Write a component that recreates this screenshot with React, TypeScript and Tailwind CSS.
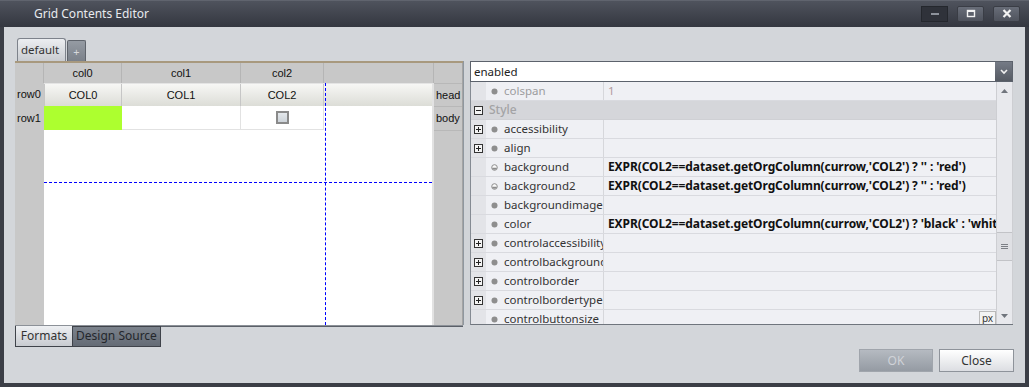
import React from 'react';

type Prop = {
  name?: string;
  value?: string;
  group?: string;
  expand?: boolean;
  half?: boolean;
  disabled?: boolean;
  px?: boolean;
};

const EXPR_RED = "EXPR(COL2==dataset.getOrgColumn(currow,'COL2') ? '' : 'red')";
const EXPR_COLOR = "EXPR(COL2==dataset.getOrgColumn(currow,'COL2') ? 'black' : 'white')";

const props: Prop[] = [
  { name: 'colspan', value: '1', disabled: true },
  { group: 'Style' },
  { name: 'accessibility', expand: true },
  { name: 'align', expand: true },
  { name: 'background', half: true, value: EXPR_RED },
  { name: 'background2', half: true, value: EXPR_RED },
  { name: 'backgroundimage' },
  { name: 'color', value: EXPR_COLOR },
  { name: 'controlaccessibility', expand: true },
  { name: 'controlbackground', expand: true },
  { name: 'controlborder', expand: true },
  { name: 'controlbordertype', expand: true },
  { name: 'controlbuttonsize', px: true },
];

const ExpandBox = ({ open }: { open?: boolean }) => (
  <svg width="9" height="9" viewBox="0 0 9 9">
    <rect x="0.5" y="0.5" width="8" height="8" fill="#f4f4f4" stroke="#333" />
    <line x1="2" y1="4.5" x2="7" y2="4.5" stroke="#222" />
    {!open && <line x1="4.5" y1="2" x2="4.5" y2="7" stroke="#222" />}
  </svg>
);

const Bullet = ({ half }: { half?: boolean }) =>
  half ? (
    <svg width="7" height="7" viewBox="0 0 7 7">
      <circle cx="3.5" cy="3.5" r="2.8" fill="#fafafa" stroke="#8c8c8c" />
      <path d="M0.8 3.8 A2.8 2.8 0 0 0 6.2 3.8 Z" fill="#8c8c8c" />
    </svg>
  ) : (
    <svg width="7" height="7" viewBox="0 0 7 7">
      <circle cx="3.5" cy="3.5" r="3" fill="#8e8e8e" />
    </svg>
  );

const TitleButton = ({ kind }: { kind: 'min' | 'max' | 'close' }) => (
  <div
    className={
      kind === 'min'
        ? 'w-[27px] h-[16px] flex items-center justify-center border border-[#24272d] bg-[#2f323a]'
        : 'w-[27px] h-[16px] flex items-center justify-center rounded-[2px] border border-[#3a3d45] bg-gradient-to-b from-[#686d78] to-[#4f535d]'
    }
  >
    {kind === 'min' && (
      <svg width="10" height="6" viewBox="0 0 10 6">
        <rect x="1" y="2" width="8" height="2" fill="#8d929b" />
      </svg>
    )}
    {kind === 'max' && (
      <svg width="10" height="9" viewBox="0 0 10 9">
        <rect x="1.5" y="1.5" width="7" height="6" fill="none" stroke="#f2f2f2" strokeWidth="1.4" />
        <rect x="1" y="1" width="8" height="2" fill="#f2f2f2" />
      </svg>
    )}
    {kind === 'close' && (
      <svg width="10" height="9" viewBox="0 0 10 9">
        <path d="M1.5 1 L8.5 8 M8.5 1 L1.5 8" stroke="#f2f2f2" strokeWidth="2.2" />
      </svg>
    )}
  </div>
);

const gridFont = "font-['Liberation_Sans',Arial,sans-serif] text-[11px] text-[#111]";

const GridArea = () => (
  <div className="flex flex-col h-[264px] border-t-2 border-[#a8997e]">
    {/* column header */}
    <div className={`flex h-[20px] bg-[#c8c8c8] ${gridFont}`}>
      <div className="w-[29px] border-r border-[#b5b5b5]" />
      <div className="w-[78px] border-r border-[#b5b5b5] flex items-center justify-center">col0</div>
      <div className="w-[119px] border-r border-[#b5b5b5] flex items-center justify-center">col1</div>
      <div className="w-[83px] border-r border-[#b5b5b5] flex items-center justify-center">col2</div>
      <div className="w-[110px] border-r border-[#b5b5b5]" />
      <div className="w-[29px] border-r border-[#a4a4a4]" />
    </div>
    <div className={`flex h-[242px] ${gridFont}`}>
      {/* row header */}
      <div className="w-[29px] bg-[#c8c8c8] flex flex-col">
        <div className="h-[23px] flex items-center pl-[2px]">row0</div>
        <div className="h-[24px] flex items-center pl-[2px]">row1</div>
      </div>
      {/* canvas */}
      <div className="relative w-[388px] bg-white">
        <div className="flex h-[23px] bg-gradient-to-b from-[#f7f7f5] to-[#dcddd7] border-t border-[#e4e4e4]">
          <div className="w-[78px] border-x border-[#c6c6c6] flex items-center justify-center">COL0</div>
          <div className="w-[119px] border-r border-[#c6c6c6] flex items-center justify-center">COL1</div>
          <div className="w-[83px] border-r border-[#c6c6c6] flex items-center justify-center">COL2</div>
        </div>
        <div className="flex h-[24px]">
          <div className="w-[78px] bg-[#adff2f]" />
          <div className="w-[119px] border-r border-b border-[#e2e2e2]" />
          <div className="w-[83px] border-r border-b border-[#e2e2e2] flex items-center justify-center">
            <div className="w-[13px] h-[13px] border-2 border-[#8a8a8a] bg-gradient-to-b from-[#e4e8ec] to-[#cdd3d9]" />
          </div>
        </div>
        <div className="absolute left-[281px] top-0 bottom-0 border-l border-dashed border-[#0000ff]" />
        <div className="absolute left-0 right-0 top-[99px] border-t border-dashed border-[#0000ff]" />
      </div>
      <div className="w-[2px] bg-[#e2e2e2]" />
      {/* band column */}
      <div className="w-[29px] bg-[#c8c8c8] border-r border-[#a4a4a4] flex flex-col">
        <div className="h-[24px] flex items-center pl-[2px] border-t border-b border-[#b8b8b8]">head</div>
        <div className="h-[24px] flex items-center pl-[2px] border-b border-[#b8b8b8]">body</div>
      </div>
    </div>
  </div>
);

const PropRow = ({ p }: { p: Prop }) => {
  if (p.group) {
    return (
      <div className="flex h-[19px] shrink-0 bg-[#d5d6da] border-b border-[#cfd0d4] items-center">
        <div className="w-[15px] flex items-center justify-center">
          <ExpandBox open />
        </div>
        <span className="ml-[3px] text-[12px] font-medium text-[#a3a3a5]">{p.group}</span>
      </div>
    );
  }
  return (
    <div className="flex h-[19px] shrink-0 bg-[#eff0f4] border-b border-[#d9dadf]">
      <div className="w-[15px] bg-[#e3e4e8] flex items-center justify-center">
        {p.expand && <ExpandBox />}
      </div>
      <div className="w-[118px] border-r border-[#d6d7db] flex items-center overflow-hidden whitespace-nowrap">
        <span className="ml-[5px] flex">
          <Bullet half={p.half} />
        </span>
        <span className={`ml-[6px] text-[11.5px] ${p.disabled ? 'text-[#9c9c9e]' : 'text-[#333]'}`}>{p.name}</span>
      </div>
      <div className="flex-1 flex items-center overflow-hidden whitespace-nowrap pl-[4px]">
        {p.value && (
          <span
            className={
              p.disabled
                ? 'text-[11.5px] text-[#b09a9e]'
                : 'text-[12px] font-bold text-[#111] tracking-[-0.1px]'
            }
          >
            {p.value}
          </span>
        )}
        {p.px && (
          <div className="ml-auto self-start mt-[1px] w-[17px] h-[14px] border border-[#b9b9b9] bg-[#f3f3f3] text-[10px] leading-[12px] text-[#333] text-center">
            px
          </div>
        )}
      </div>
    </div>
  );
};

const ScrollBar = () => (
  <div className="w-[17px] bg-[#e8e9ed] border-l border-[#cdced2] border-r border-[#8f959d] flex flex-col">
    <div className="h-[17px] flex items-center justify-center">
      <svg width="7" height="4" viewBox="0 0 7 4">
        <path d="M0 4 L3.5 0 L7 4 Z" fill="#70757d" />
      </svg>
    </div>
    <div className="flex-1 flex flex-col">
      <div className="h-[133px]" />
      <div className="h-[29px] bg-[#dfe0e4] border-y border-[#c2c3c7] flex items-center justify-center">
        <svg width="7" height="7" viewBox="0 0 7 7">
          <path d="M0 1.5 H7 M0 3.5 H7 M0 5.5 H7" stroke="#7c7f85" />
        </svg>
      </div>
    </div>
    <div className="h-[17px] flex items-center justify-center">
      <svg width="7" height="4" viewBox="0 0 7 4">
        <path d="M0 0 L7 0 L3.5 4 Z" fill="#70757d" />
      </svg>
    </div>
  </div>
);

export default function App() {
  return (
    <div className="w-[1029px] h-[387px] flex flex-col bg-[#3b3e46] overflow-hidden font-['Noto_Sans',sans-serif]">
      {/* title bar */}
      <div className="h-[27px] shrink-0 flex items-center pl-[34px] pr-[9px] border-t border-[#60646e] bg-gradient-to-b from-[#4f535d] to-[#343740]">
        <span className="text-[12px] text-[#e8eaee]">Grid Contents Editor</span>
        <div className="ml-auto flex gap-[9px] -mt-[1px]">
          <TitleButton kind="min" />
          <TitleButton kind="max" />
          <TitleButton kind="close" />
        </div>
      </div>

      <div className="flex-1 mx-[4px] mb-[4px] bg-[#d3d6da] pt-[11px] pl-[11px] pr-[12px] flex flex-col">
        <div className="flex">
          {/* left: grid editor */}
          <div className="w-[448px] flex flex-col">
            <div className="h-[23px] flex items-end pl-[2px]">
              <div className="w-[49px] h-[23px] rounded-t-[3px] border border-b-0 border-[#7d828b] bg-gradient-to-b from-[#eceef1] to-[#c9ccd1] text-[11.5px] text-[#333] pl-[3px] leading-[21px]">
                default
              </div>
              <div className="ml-[1px] w-[19px] h-[21px] rounded-t-[2px] border border-b-0 border-[#5f646c] bg-gradient-to-b from-[#959ba3] to-[#7b818a] text-[11px] text-[#d6d8dc] text-center leading-[22px]">
                +
              </div>
            </div>
            <GridArea />
            <div className="h-[22px] flex border-t border-[#8c9198]">
              <div className="w-[58px] h-[21px] border-x border-b border-[#3f434a] bg-gradient-to-b from-[#eef0f3] to-[#c8cbd0] text-[12px] text-[#333] text-center leading-[19px]">
                Formats
              </div>
              <div className="w-[88px] h-[21px] border-r border-b border-t border-[#3f434a] bg-gradient-to-b from-[#7b828c] to-[#646b75] text-[12px] text-[#24272c] text-center leading-[18px]">
                Design Source
              </div>
              <div className="flex-1 border-t border-[#5b6068]" />
            </div>
          </div>

          {/* right: property grid */}
          <div className="mt-[23px] h-[264px] flex">
            <div className="w-[7px] bg-[#d1d4d8] border-l border-[#8f979f]" />
            <div className="w-[543px] flex flex-col">
              <div className="h-[21px] shrink-0 flex border border-[#5c626c] bg-white">
                <div className="flex-1 pl-[3px] text-[11.5px] text-[#222] leading-[19px]">enabled</div>
                <div className="w-[17px] flex items-center justify-center bg-gradient-to-b from-[#757b86] to-[#555a63]">
                  <svg width="8" height="6" viewBox="0 0 8 6">
                    <path d="M1 1 L4 4 L7 1" fill="none" stroke="#f0f0f0" strokeWidth="1.6" />
                  </svg>
                </div>
              </div>
              <div className="flex-1 flex border-l border-[#858b93] border-b border-b-[#6f757d] overflow-hidden">
                <div className="flex-1 flex flex-col overflow-hidden">
                  {props.map((p, i) => (
                    <PropRow key={i} p={p} />
                  ))}
                </div>
                <ScrollBar />
              </div>
            </div>
          </div>
        </div>

        {/* dialog buttons */}
        <div className="mt-[2px] flex justify-end gap-[6px] -mr-[1px]">
          <div className="w-[74px] h-[23px] border border-[#a0a5ac] bg-gradient-to-b from-[#b5bac1] to-[#959ba3] text-[12px] text-[#d0d3d8] flex items-center justify-center">
            OK
          </div>
          <div className="w-[75px] h-[23px] border border-[#8e939a] bg-gradient-to-b from-[#ffffff] to-[#dcdee2] text-[12px] text-[#333] flex items-center justify-center">
            Close
          </div>
        </div>
      </div>
    </div>
  );
}
